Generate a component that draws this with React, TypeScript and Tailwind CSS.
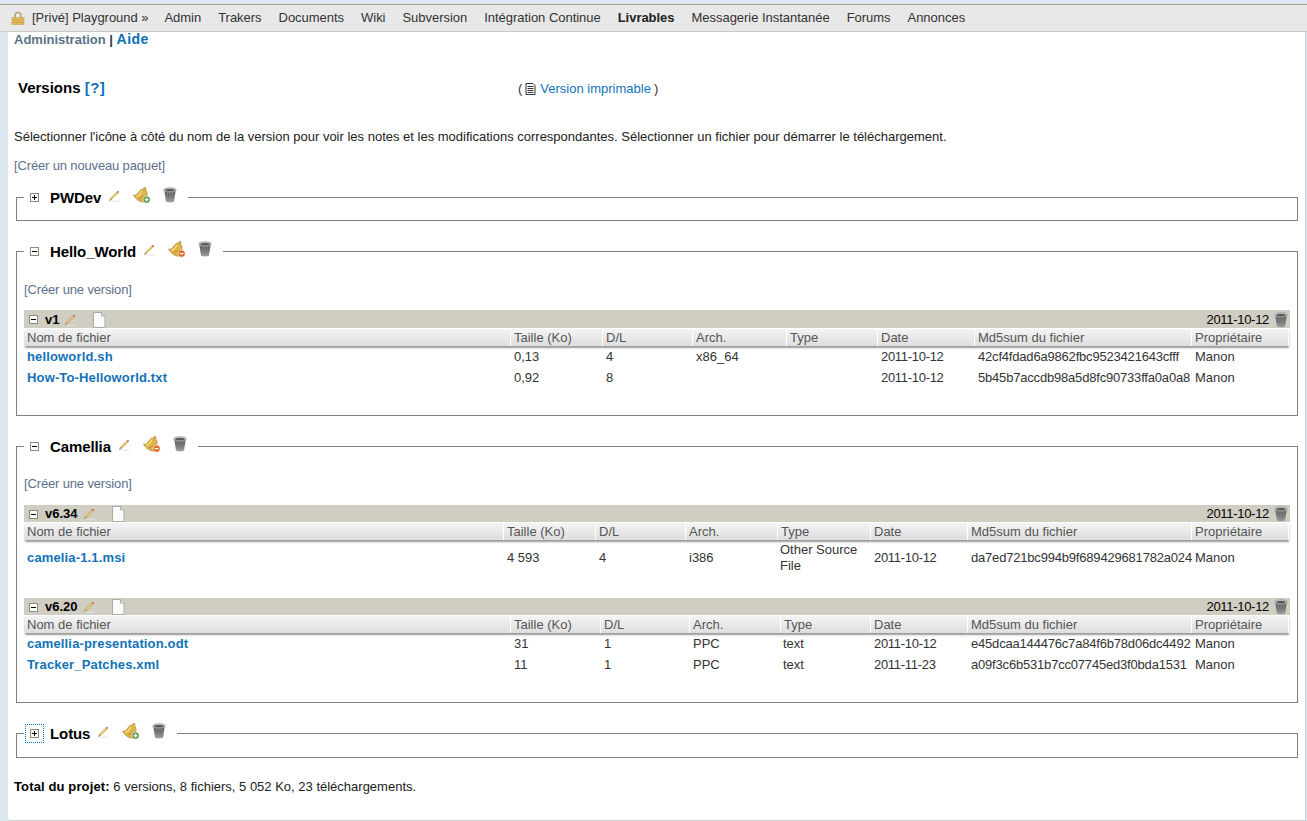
import React from 'react';

const Pencil = () => (
  <svg width="12" height="12" viewBox="0 0 12 12" className="shrink-0">
    <path d="M2.500 11.200h9" stroke="#e2e2e2" strokeWidth="1" />
    <path d="M2.300 8.300 8.800 1.900l1.200 1.200-6.500 6.500z" fill="#f2cf6a" stroke="#a0823a" strokeWidth="0.5" />
    <path d="M8.800 1.900 9.900.8l1.300 1.300-1.200 1z" fill="#d8524a" />
    <path d="M2.300 8.300 1.300 10.700l2.200-1.100z" fill="#f3dcb0" stroke="#6e5a34" strokeWidth="0.4" />
  </svg>
);

const Bell = ({ mode }: { mode: 'plus' | 'minus' }) => (
  <svg width="18" height="18" viewBox="0 0 18 18" className="shrink-0">
    <path d="M.6 8.300c2.400.1 3.800-1 5-3C7 3 8.500 2 10.300 2.200l.9-1.900 1.900.8-.7 1.800c1.400 1.300 1.900 3 1.500 5.200-.3 1.400 0 2.800.8 3.900-1.200 2-2.500 2.800-3.400 3.200C7.500 15 5.500 13.800 3.600 12 2.300 10.900 1.200 9.700.6 8.300z" fill="#e0b346" stroke="#a8842e" strokeWidth="0.7" />
    <path d="M3.500 9.300c2.500-.6 4.300-2.600 5.200-5.400" stroke="#f6e6a4" strokeWidth="1.200" fill="none" />
    <path d="M6 11.800c1.900-.6 3.500-1.500 4.800-3" stroke="#b98d2e" strokeWidth="1" fill="none" />
    <circle cx="13.600" cy="12.600" r="3.600" fill={mode === 'plus' ? '#4f9a3c' : '#e0651f'} stroke="#fff" strokeWidth="0.6" />
    <path d="M11.700 12.600h3.800" stroke="#fff" strokeWidth="1.400" />
    {mode === 'plus' && <path d="M13.600 10.700v3.800" stroke="#fff" strokeWidth="1.400" />}
  </svg>
);

const Trash = () => (
  <svg width="14" height="16" viewBox="0 0 14 16" className="shrink-0">
    <defs>
      <linearGradient id="bin" x1="0" x2="0" y1="0" y2="1">
        <stop offset="0" stopColor="#5e5e5e" />
        <stop offset="0.55" stopColor="#767676" />
        <stop offset="1" stopColor="#a8a8a8" />
      </linearGradient>
    </defs>
    <path d="M1.300 3.500 3 14.800c2.500.9 5.500.9 8 0l1.700-11.300z" fill="url(#bin)" />
    <path d="M4 6l.8 8M7 6.500V15M10 6l-.8 8" stroke="#8c8c8c" strokeWidth="0.6" />
    <ellipse cx="7" cy="3" rx="6.300" ry="2.300" fill="#c2c2c2" stroke="#8a8a8a" strokeWidth="0.6" />
    <ellipse cx="7" cy="3.200" rx="4.600" ry="1.200" fill="#555" />
  </svg>
);

const Doc = () => (
  <svg width="14" height="16" viewBox="0 0 14 16" className="shrink-0">
    <path d="M1.500.5h8l3.500 3.500v11.500h-11.500z" fill="#fbfcf9" stroke="#a8ada4" />
    <path d="M9.500.5v3.500h3.500" fill="#e6e8e2" stroke="#a8ada4" />
  </svg>
);

const Toggle = ({ open }: { open: boolean }) => (
  <span className="relative block h-[9px] w-[9px] shrink-0 border border-[#8f8a78] bg-white">
    <span className="absolute left-[1px] top-[3px] h-px w-[5px] bg-black" />
    {!open && <span className="absolute left-[3px] top-[1px] h-[5px] w-px bg-black" />}
  </span>
);

type Row = { name: string; size: string; dl: string; arch: string; type: React.ReactNode; date: string; md5: string };

type Release = { version: string; cols: string; barClass: string; rowClass?: string; rows: Row[] };

const headers = ['Nom de fichier', 'Taille (Ko)', 'D/L', 'Arch.', 'Type', 'Date', 'Md5sum du fichier', 'Propriétaire'];

const ReleaseBlock = ({ release }: { release: Release }) => (
  <div>
    <div className={`flex ${release.barClass} items-center bg-[#d0cdc2] pl-[5px] pr-[2px] pt-[1px]`}>
      <Toggle open />
      <span className="ml-[7px] text-[13px] font-bold text-black">{release.version}</span>
      <span className="ml-[5px]"><Pencil /></span>
      <span className="ml-[16px]"><Doc /></span>
      <span className="ml-auto text-[13px] tracking-[-0.3px] text-black">2011-10-12</span>
      <span className="ml-[5px]"><Trash /></span>
    </div>
    <div className={`grid ${release.cols} mx-px mt-px h-[17px] items-center rounded-[1px] bg-gradient-to-b from-[#f4f4f4] to-[#dedede] text-[13px] text-[#555] shadow-[0_2px_2px_#999]`}>
      {headers.map((h, i) => (
        <div key={h} className={`h-full border-r border-white leading-[17px] ${i === 0 ? 'pl-[2px]' : 'pl-[3px]'}`}>{h}</div>
      ))}
    </div>
    <div className="mx-px">
      {release.rows.map((r) => (
        <div key={r.name} className={`grid ${release.cols} ${release.rowClass ?? 'h-[21px]'} items-center text-[13px] leading-[16px] text-[#333]`}>
          <a className="pl-[2px] font-bold tracking-[0.15px] text-[#1272b8]">{r.name}</a>
          <div className="pl-[3px]">{r.size}</div>
          <div className="pl-[3px]">{r.dl}</div>
          <div className="pl-[3px]">{r.arch}</div>
          <div className="pl-[2px]">{r.type}</div>
          <div className="pl-[3px] tracking-[-0.3px]">{r.date}</div>
          <div className="pl-[3px] whitespace-nowrap tracking-[-0.19px]">{r.md5}</div>
          <div className="pl-[3px]">Manon</div>
        </div>
      ))}
    </div>
  </div>
);

const Package = ({ name, open, focus, children, contentClass }: {
  name: string; open: boolean; focus?: boolean; children?: React.ReactNode; contentClass?: string;
}) => (
  <fieldset className="mx-[16px] w-[1282px] border border-[#808080]">
    <legend className="ml-[7px] flex h-[24px] items-center pl-[6px] pr-[11px]">
      <span className={focus ? 'outline-1 outline-dotted outline-[#1272b8] outline-offset-[4px]' : ''}><Toggle open={open} /></span>
      <span className="ml-[11px] mt-[2px] text-[15px] font-bold tracking-[-0.1px] text-black">{name}</span>
      <span className="ml-[7px] -mt-[3px]"><Pencil /></span>
      <span className="ml-[13px] -mt-[3px]"><Bell mode={open ? 'minus' : 'plus'} /></span>
      <span className="ml-[12px] -mt-[4px]"><Trash /></span>
    </legend>
    <div className={contentClass}>{children}</div>
  </fieldset>
);

const App = () => {
  const v1: Release = {
    version: 'v1',
    cols: 'grid-cols-[486px_92px_90px_94px_91px_97px_217px_97px]',
    barClass: 'h-[18px]',
    rows: [
      { name: 'helloworld.sh', size: '0,13', dl: '4', arch: 'x86_64', type: '', date: '2011-10-12', md5: '42cf4fdad6a9862fbc9523421643cfff' },
      { name: 'How-To-Helloworld.txt', size: '0,92', dl: '8', arch: '', type: '', date: '2011-10-12', md5: '5b45b7accdb98a5d8fc90733ffa0a0a8' },
    ],
  };
  const v634: Release = {
    version: 'v6.34',
    cols: 'grid-cols-[479px_92px_90px_92px_93px_97px_224px_97px]',
    barClass: 'h-[17px]',
    rowClass: 'h-[36px]',
    rows: [
      { name: 'camelia-1.1.msi', size: '4 593', dl: '4', arch: 'i386', type: <>Other Source<br />File</>, date: '2011-10-12', md5: 'da7ed721bc994b9f689429681782a024' },
    ],
  };
  const v620: Release = {
    version: 'v6.20',
    cols: 'grid-cols-[486px_90px_89px_91px_90px_97px_224px_97px]',
    barClass: 'h-[17px]',
    rows: [
      { name: 'camellia-presentation.odt', size: '31', dl: '1', arch: 'PPC', type: 'text', date: '2011-10-12', md5: 'e45dcaa144476c7a84f6b78d06dc4492' },
      { name: 'Tracker_Patches.xml', size: '11', dl: '1', arch: 'PPC', type: 'text', date: '2011-11-23', md5: 'a09f3c6b531b7cc07745ed3f0bda1531' },
    ],
  };
  const nav = ['Admin', 'Trakers', 'Documents', 'Wiki', 'Subversion', 'Intégration Continue', 'Livrables', 'Messagerie Instantanée', 'Forums', 'Annonces'];

  return (
    <div className="h-[821px] w-[1307px] overflow-hidden bg-[#dce8f0] pt-[4px] font-['Liberation_Sans',Arial,sans-serif] text-[13px] text-black">
      <div className="flex h-[28px] items-center rounded-bl-[3px] border-t border-b border-t-[#a8a890] border-b-[#c8c8c8] bg-[#e8e8e8] pl-[11px] text-[13px] tracking-[-0.03px] text-[#333]">
        <svg width="14" height="14" viewBox="0 0 14 14" className="shrink-0">
          <path d="M4 7V4.500a3 3 0 0 1 6 0V7" fill="none" stroke="#b8a070" strokeWidth="1.500" />
          <rect x="1" y="6.500" width="12" height="7" fill="#e2b860" stroke="#c09440" strokeWidth="0.5" />
          <path d="M1 9h12M1 11.500h12" stroke="#c89c48" strokeWidth="0.8" />
        </svg>
        <span className="ml-[7px]">[Privé] Playground »</span>
        <div className="ml-[16px] flex gap-[17px]">
          {nav.map((n) => (
            <span key={n} className={n === 'Livrables' ? 'font-bold text-[#222]' : ''}>{n}</span>
          ))}
        </div>
      </div>
      <div className="ml-[8px] mr-[1px] h-[789px] rounded-bl-[3px] border-r border-b border-[#ccc] bg-white">
        <div className="h-[15px] pl-[6px] text-[13px] font-bold leading-[15px] text-[#5a7288]">
          Administration <span className="text-[#1c3a52]">|</span> <span className="text-[14px] tracking-[0.45px] text-[#0a6fb5]">Aide</span>
        </div>
        <div className="mt-[32px] flex h-[18px] items-center pl-[10px]">
          <h1 className="w-[500px] text-[15px] font-bold text-black">
            Versions <span className="tracking-[0.5px] text-[#1272b8]">[?]</span>
          </h1>
          <div className="mt-[1px] flex items-center text-[13px] text-[#333]">
            <span>(</span>
            <svg width="11" height="12" viewBox="0 0 11 12" className="ml-[3px] shrink-0">
              <path d="M1 .5h7l2 2v9H1z" fill="#fff" stroke="#333" />
              <path d="M2.500 3.500h6M2.500 5.500h6M2.500 7.500h6M2.500 9.500h6" stroke="#333" />
            </svg>
            <span className="ml-[4px] text-[#1272b8]">Version imprimable</span>
            <span className="ml-[3px]">)</span>
          </div>
        </div>
        <p className="mt-[32px] pl-[6px] text-[13px] leading-[15px] text-[#222]">
          Sélectionner l'icône à côté du nom de la version pour voir les notes et les modifications correspondantes. Sélectionner un fichier pour démarrer le téléchargement.
        </p>
        <div className="mt-[14px] pl-[6px] leading-[15px] tracking-[-0.15px] text-[#5d6f8c]">[Créer un nouveau paquet]</div>
        <div className="mt-[12px] -ml-[8px] flex flex-col gap-[18px]">
          <Package name="PWDev" open={false} contentClass="h-[11px]" />
          <Package name="Hello_World" open contentClass="h-[152px] px-[7px]">
            <div className="pt-[19px] leading-[15px] tracking-[-0.15px] text-[#5d6f8c]">[Créer une version]</div>
            <div className="mt-[13px]"><ReleaseBlock release={v1} /></div>
          </Package>
          <Package name="Camellia" open contentClass="h-[244px] px-[7px]">
            <div className="pt-[18px] leading-[15px] tracking-[-0.15px] text-[#5d6f8c]">[Créer une version]</div>
            <div className="mt-[14px]"><ReleaseBlock release={v634} /></div>
            <div className="mt-[22px]"><ReleaseBlock release={v620} /></div>
          </Package>
          <Package name="Lotus" open={false} focus contentClass="h-[12px]" />
        </div>
        <div className="mt-[21px] pl-[6px] leading-[15px] text-[#222]">
          <b className="tracking-[0.13px] text-black">Total du projet:</b> 6 versions, 8 fichiers, 5 052 Ko, 23 téléchargements.
        </div>
      </div>
    </div>
  );
};

export default App;
